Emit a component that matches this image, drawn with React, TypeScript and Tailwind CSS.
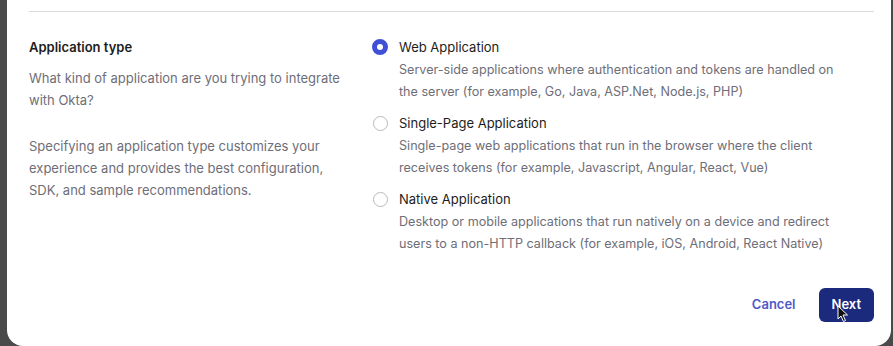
import React, { useState } from 'react';

type AppType = {
  id: string;
  label: string;
  description: string[];
};

const APP_TYPES: AppType[] = [
  {
    id: 'web',
    label: 'Web Application',
    description: [
      'Server-side applications where authentication and tokens are handled on',
      'the server (for example, Go, Java, ASP.Net, Node.js, PHP)',
    ],
  },
  {
    id: 'spa',
    label: 'Single-Page Application',
    description: [
      'Single-page web applications that run in the browser where the client',
      'receives tokens (for example, Javascript, Angular, React, Vue)',
    ],
  },
  {
    id: 'native',
    label: 'Native Application',
    description: [
      'Desktop or mobile applications that run natively on a device and redirect',
      'users to a non-HTTP callback (for example, iOS, Android, React Native)',
    ],
  },
];

const Radio: React.FC<{ checked: boolean }> = ({ checked }) =>
  checked ? (
    <span className="w-[16px] h-[16px] rounded-full border-[5px] border-[#3f4fd6] bg-white shrink-0" />
  ) : (
    <span className="w-[15px] h-[15px] rounded-full border-[1.5px] border-[#b9b9bf] bg-white shrink-0" />
  );

const App: React.FC = () => {
  const [selected, setSelected] = useState('web');

  return (
    <div
      className="h-[346px] w-[893px] bg-[#4a4a4a] pl-[7px] pr-[2px] overflow-hidden"
      style={{ fontFamily: 'Inter, "Noto Sans", sans-serif' }}
    >
      <div className="relative h-full bg-white rounded-b-[16px] px-[22px] pt-[11px]">
        <div className="h-px bg-[#dcdcde] mr-[-5px]" />

        <div className="flex mt-[24px]">
          <div className="w-[343px] shrink-0 pr-4">
            <h2 className="text-[13px] leading-[22px] font-semibold text-[#1d1d21]">Application type</h2>
            <p className="mt-[9px] text-[13px] leading-[22px] text-[#6e6e78]">
              What kind of application are you trying to integrate
              <br />
              with Okta?
            </p>
            <p className="mt-[24px] text-[13px] leading-[22px] text-[#6e6e78]">
              Specifying an application type customizes your
              <br />
              experience and provides the best configuration,
              <br />
              SDK, and sample recommendations.
            </p>
          </div>

          <div className="flex flex-col gap-[9px]">
            {APP_TYPES.map((t) => (
              <label key={t.id} className="flex gap-[11px] cursor-pointer" onClick={() => setSelected(t.id)}>
                <span className="h-[22px] flex items-center w-[16px] justify-center">
                  <Radio checked={selected === t.id} />
                </span>
                <span className="flex flex-col">
                  <span className="text-[13px] leading-[22px] text-[#1d1d21]">{t.label}</span>
                  <span className="mt-[1px] text-[12.6px] leading-[22px] text-[#6e6e78]">
                    {t.description.map((line) => (
                      <span key={line} className="block whitespace-nowrap">
                        {line}
                      </span>
                    ))}
                  </span>
                </span>
              </label>
            ))}
          </div>
        </div>

        <div className="flex justify-end items-center gap-[23px] mt-[33px] mr-[-5px]">
          <button className="text-[13px] font-semibold text-[#5258c8]">Cancel</button>
          <div className="relative">
            <button className="h-[34px] px-[13px] rounded-[6px] bg-[#1b2a7c] text-white text-[13px] font-semibold">
              Next
            </button>
            <svg
              className="absolute left-[18px] top-[17px]"
              width="12"
              height="18"
              viewBox="0 0 12 18"
            >
              <path d="M1 1 L1 14 L4 11 L6.5 16.5 L8.5 15.5 L6 10 L10.5 10 Z" fill="#111" stroke="#fff" strokeWidth="1" />
            </svg>
          </div>
        </div>
      </div>
    </div>
  );
};

export default App;
